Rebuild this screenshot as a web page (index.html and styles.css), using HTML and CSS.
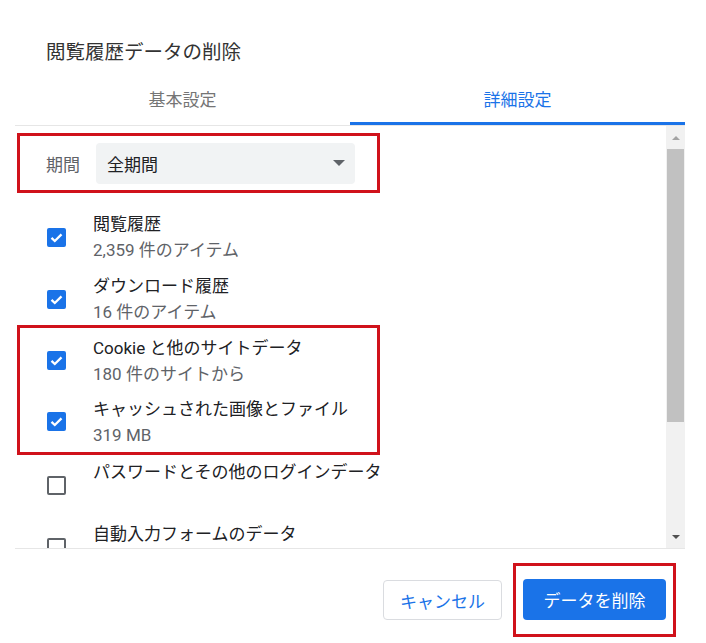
FILE: index.html
```html
<!DOCTYPE html>
<html lang="ja">
<head>
    <meta charset="UTF-8">
    <meta name="viewport" content="width=device-width, initial-scale=1.0">
    <title>閲覧履歴データの削除</title>
    <link rel="stylesheet" href="styles.css">
</head>
<body>
    <div class="dialog">
        <h1 class="dialog-title">閲覧履歴データの削除</h1>
        <div class="tabs">
            <div class="tab">基本設定</div>
            <div class="tab active">詳細設定</div>
        </div>

        <div class="list-box">
            <div class="list">
                <div class="period">
                    <span class="period-label">期間</span>
                    <div class="select">
                        <span>全期間</span>
                        <span class="select-arrow"></span>
                    </div>
                </div>

                <div class="rows">
                    <div class="row">
                        <span class="check checked">
                            <svg viewBox="0 0 19 19" width="19" height="19"><path d="M4.5 9.8l3.3 3.2 6.7-6.6" fill="none" stroke="#fff" stroke-width="2.3"/></svg>
                        </span>
                        <div class="row-text">
                            <div class="row-title">閲覧履歴</div>
                            <div class="row-sub">2,359 件のアイテム</div>
                        </div>
                    </div>
                    <div class="row">
                        <span class="check checked">
                            <svg viewBox="0 0 19 19" width="19" height="19"><path d="M4.5 9.8l3.3 3.2 6.7-6.6" fill="none" stroke="#fff" stroke-width="2.3"/></svg>
                        </span>
                        <div class="row-text">
                            <div class="row-title">ダウンロード履歴</div>
                            <div class="row-sub">16 件のアイテム</div>
                        </div>
                    </div>

                    <div class="mark">
                        <div class="row">
                            <span class="check checked">
                                <svg viewBox="0 0 19 19" width="19" height="19"><path d="M4.5 9.8l3.3 3.2 6.7-6.6" fill="none" stroke="#fff" stroke-width="2.3"/></svg>
                            </span>
                            <div class="row-text">
                                <div class="row-title">Cookie と他のサイトデータ</div>
                                <div class="row-sub">180 件のサイトから</div>
                            </div>
                        </div>
                        <div class="row">
                            <span class="check checked">
                                <svg viewBox="0 0 19 19" width="19" height="19"><path d="M4.5 9.8l3.3 3.2 6.7-6.6" fill="none" stroke="#fff" stroke-width="2.3"/></svg>
                            </span>
                            <div class="row-text">
                                <div class="row-title">キャッシュされた画像とファイル</div>
                                <div class="row-sub">319 MB</div>
                            </div>
                        </div>
                    </div>

                    <div class="row">
                        <span class="check"></span>
                        <div class="row-text">
                            <div class="row-title">パスワードとその他のログインデータ</div>
                        </div>
                    </div>
                    <div class="row">
                        <span class="check"></span>
                        <div class="row-text">
                            <div class="row-title">自動入力フォームのデータ</div>
                        </div>
                    </div>
                </div>
            </div>

            <div class="scrollbar">
                <div class="sb-btn"><span class="sb-up"></span></div>
                <div class="sb-thumb"></div>
                <div class="sb-track"></div>
                <div class="sb-btn"><span class="sb-down"></span></div>
            </div>
        </div>

        <div class="footer">
            <button class="btn cancel-btn">キャンセル</button>
            <div class="btn-mark">
                <button class="btn delete-btn">データを削除</button>
            </div>
        </div>
    </div>
</body>
</html>
```

FILE: styles.css
```css
body {
    margin: 0;
    background-color: #ffffff;
    font-family: Roboto, "Noto Sans CJK JP", sans-serif;
    color: #202124;
}
.dialog {
    width: 706px;
    height: 643px;
    overflow: hidden;
}
.dialog-title {
    margin: 0;
    padding: 41px 0 0 46px;
    font-size: 19.5px;
    font-weight: normal;
    line-height: 24px;
    color: #333333;
}
.tabs {
    display: flex;
    margin: 0 21px 0 15px;
    border-bottom: 1px solid #e6e6e6;
}
.tab {
    flex: 1;
    text-align: center;
    font-size: 17px;
    line-height: 24px;
    padding: 23px 0 10px;
    border-bottom: 3px solid transparent;
    color: #757575;
}
.tab.active {
    color: #1a73e8;
    border-bottom-color: #1a73e8;
}
.list-box {
    display: flex;
    height: 422px;
    margin: 0 21px 0 15px;
    border-bottom: 1px solid #e6e6e6;
}
.list {
    flex: 1;
    overflow: hidden;
}
.period {
    display: flex;
    align-items: center;
    box-sizing: border-box;
    width: 363px;
    height: 60px;
    margin: 7px 0 0 2px;
    padding-left: 26px;
    border: 3px solid #d0121b;
}
.period-label {
    font-size: 17px;
    color: #5f6368;
    width: 50px;
}
.select {
    display: flex;
    align-items: center;
    justify-content: space-between;
    box-sizing: border-box;
    width: 259px;
    height: 41px;
    padding: 0 10px 0 11px;
    background-color: #f1f3f4;
    border-radius: 4px;
    font-size: 17px;
}
.select-arrow {
    width: 0;
    height: 0;
    border-left: 6px solid transparent;
    border-right: 6px solid transparent;
    border-top: 6px solid #5f6368;
}
.rows {
    margin-top: 13px;
}
.row {
    display: flex;
    height: 62px;
    padding-left: 32px;
}
.check {
    align-self: center;
    box-sizing: border-box;
    width: 19px;
    height: 19px;
    margin-right: 27px;
    border: 2px solid #5f6368;
    border-radius: 2px;
    flex-shrink: 0;
}
.check svg {
    display: block;
    margin: -2px;
}
.check.checked {
    background-color: #1a73e8;
    border-color: #1a73e8;
}
.row-text {
    padding-top: 5px;
}
.row-title {
    font-size: 17px;
    line-height: 26px;
    color: #202124;
}
.row-sub {
    font-size: 17px;
    line-height: 26px;
    color: #5f6368;
}
.mark {
    width: 363px;
    box-sizing: border-box;
    margin: -5px 0 -1px 2px;
    padding-top: 2px;
    border: 3px solid #d0121b;
}
.mark .row {
    height: 61px;
    padding-left: 27px;
}
.scrollbar {
    display: flex;
    flex-direction: column;
    width: 19px;
    background-color: #f1f1f1;
}
.sb-btn {
    height: 23px;
    display: flex;
    align-items: center;
    justify-content: center;
}
.sb-up {
    width: 0;
    height: 0;
    border-left: 4px solid transparent;
    border-right: 4px solid transparent;
    border-bottom: 4px solid #a3a3a3;
}
.sb-down {
    width: 0;
    height: 0;
    border-left: 4px solid transparent;
    border-right: 4px solid transparent;
    border-top: 4px solid #505050;
}
.sb-thumb {
    height: 273px;
    margin: 0 1px;
    background-color: #c1c1c1;
}
.sb-track {
    flex: 1;
}
.footer {
    display: flex;
    justify-content: flex-end;
    align-items: center;
    padding: 14px 30px 6px 0;
}
.btn {
    font-family: Roboto, "Noto Sans CJK JP", sans-serif;
    font-size: 17px;
    border-radius: 4px;
    cursor: pointer;
    padding: 0;
}
.cancel-btn {
    width: 119px;
    height: 40px;
    margin-right: 11px;
    background-color: #ffffff;
    color: #1a73e8;
    border: 1px solid #dadce0;
}
.btn-mark {
    padding: 13px 7px 14px;
    border: 3px solid #d0121b;
}
.delete-btn {
    display: block;
    width: 143px;
    height: 41px;
    background-color: #1a73e8;
    color: #ffffff;
    border: none;
}
```
